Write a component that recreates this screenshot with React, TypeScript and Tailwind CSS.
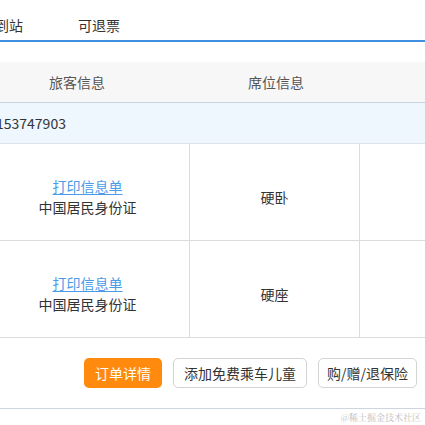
import React from 'react';

const passengers = [
  { id: 1, idType: '中国居民身份证', seat: '硬卧' },
  { id: 2, idType: '中国居民身份证', seat: '硬座' },
];

const OrderPanel = () => {
  return (
    <div
      className="w-[425px] h-[425px] overflow-hidden bg-white text-[#333] text-[14px]"
      style={{ fontFamily: '"Noto Sans CJK SC", "Noto Sans", "Liberation Sans", sans-serif' }}
    >
      {/* Tabs */}
      <div className="flex items-center h-[42px] pt-[15px] pb-[5px] border-b-2 border-[#3f8fe0] leading-[20px] whitespace-nowrap">
        <span className="ml-[-5px] w-[83px] shrink-0">到站</span>
        <span>可退票</span>
      </div>

      {/* Table */}
      <div className="mt-[20px]">
        <div className="flex h-[41px] items-center bg-[#f7f7f7] border-b border-[#c9d4df] text-[#555]">
          <div className="w-[154px] text-center">旅客信息</div>
          <div className="w-[244px] text-center">席位信息</div>
        </div>
        <div className="flex h-[41px] items-center bg-[#eef6fe] border-b border-[#dfe4ea] whitespace-nowrap">
          <span className="ml-[-4px]">153747903</span>
        </div>
        {passengers.map((p) => (
          <div key={p.id} className="flex h-[97px] border-b border-[#dcdcdc]">
            <div className="ml-[-14px] w-[204px] shrink-0 pt-[10px] flex flex-col items-center justify-center border-r border-[#dcdcdc] leading-[21px]">
              <a className="text-[#4a9be8] underline underline-offset-2 cursor-pointer">打印信息单</a>
              <span>{p.idType}</span>
            </div>
            <div className="w-[170px] shrink-0 pt-[10px] flex items-center justify-center border-r border-[#dcdcdc]">
              {p.seat}
            </div>
            <div className="flex-1" />
          </div>
        ))}
      </div>

      {/* Actions */}
      <div className="flex justify-end gap-[11px] pt-[20px] pb-[20px] pr-[8px] border-b border-[#cdd6df] whitespace-nowrap">
        <button className="h-[30px] px-[11px] rounded-[5px] bg-[#ff8a0d] text-white">订单详情</button>
        <button className="h-[30px] px-[10px] rounded-[5px] border border-[#d4d4d4] bg-white text-[#333]">添加免费乘车儿童</button>
        <button className="h-[30px] px-[8px] rounded-[5px] border border-[#d4d4d4] bg-white text-[#333]">购/赠/退保险</button>
      </div>
      <div
        className="flex justify-end pr-[4px] pt-[3px] text-[9px] leading-[12px] text-[#bdbdbd]"
        style={{ fontFamily: '"Noto Serif CJK SC", "Noto Sans CJK SC", serif' }}
      >
        @稀土掘金技术社区
      </div>
    </div>
  );
};

export default OrderPanel;
